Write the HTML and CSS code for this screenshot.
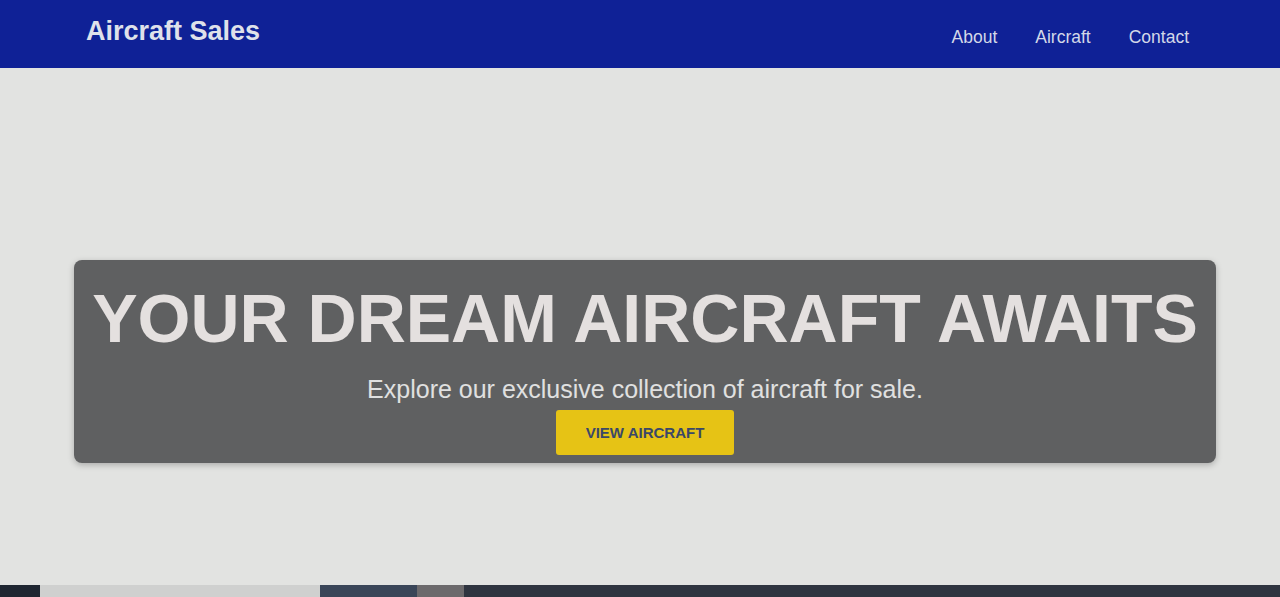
FILE: index.html
```html
<!DOCTYPE html>
<html lang="en">
<head>
<meta charset="utf-8">
<title>Aircraft Sales</title>
<link rel="stylesheet" href="styles.css">
</head>
<body>
<div class="page">
  <header class="topbar">
    <div class="brand">Aircraft Sales</div>
    <nav class="nav">
      <a href="#">About</a>
      <a href="#">Aircraft</a>
      <a href="#">Contact</a>
    </nav>
  </header>
  <main class="main">
    <section class="hero">
      <h1 class="hero-title">YOUR DREAM AIRCRAFT AWAITS</h1>
      <p class="hero-sub">Explore our exclusive collection of aircraft for sale.</p>
      <a class="hero-btn" href="#">VIEW AIRCRAFT</a>
    </section>
  </main>
  <div class="taskbar">
    <div class="tb-start"></div>
    <div class="tb-search"></div>
    <div class="tb-app"></div>
    <div class="tb-app2"></div>
    <div class="tb-rest"></div>
  </div>
</div>
</body>
</html>
```
FILE: styles.css
```css
html, body {
  margin: 0;
  padding: 0;
  height: 100%;
}
body {
  font-family: "Liberation Sans", Arial, sans-serif;
  background: #e2e3e1;
}
.page {
  height: 597px;
  display: flex;
  flex-direction: column;
}
.topbar {
  height: 68px;
  flex: none;
  background: #0f2196;
  display: flex;
  align-items: center;
  justify-content: space-between;
  padding: 0 91px 0 86px;
  box-sizing: border-box;
}
.brand {
  color: #dfe1ea;
  font-weight: bold;
  font-size: 27px;
  margin-top: -6px;
}
.nav {
  display: flex;
  gap: 38px;
  margin-top: 7px;
}
.nav a {
  color: #d3d8e8;
  text-decoration: none;
  font-size: 17.5px;
}
.main {
  flex: 1;
  padding: 192px 64px 0 74px;
}
.hero {
  background: #5f6061;
  border-radius: 8px;
  box-shadow: 0 2px 6px rgba(0,0,0,0.25);
  height: 203px;
  box-sizing: border-box;
  display: flex;
  flex-direction: column;
  align-items: center;
  padding-top: 20px;
}
.hero-title {
  margin: 0;
  color: #e4e0df;
  font-size: 68px;
  font-weight: bold;
  line-height: 76px;
}
.hero-sub {
  margin: 19px 0 0;
  color: #e0e0e0;
  font-size: 25px;
  line-height: 28px;
}
.hero-btn {
  margin-top: 7px;
  width: 178px;
  height: 45px;
  background: #e6c315;
  border-radius: 3px;
  color: #3b4868;
  font-weight: bold;
  font-size: 15px;
  text-decoration: none;
  display: flex;
  align-items: center;
  justify-content: center;
}
.taskbar {
  height: 12px;
  flex: none;
  display: flex;
  background: #2e3440;
}
.tb-start {
  width: 40px;
  background: #1f2631;
}
.tb-search {
  width: 280px;
  background: #cfd0cf;
}
.tb-app {
  width: 97px;
  background: #3a4658;
}
.tb-app2 {
  width: 47px;
  background: #6c6a6c;
}
.tb-rest {
  flex: 1;
  background: #2f3540;
}
```
